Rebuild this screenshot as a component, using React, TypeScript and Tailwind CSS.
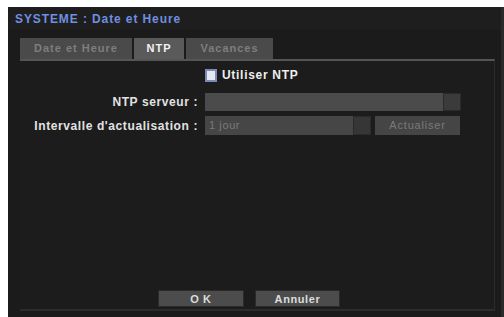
export default function App() {
  return (
    <div className="h-[317px] w-[504px] overflow-hidden bg-white pl-[8px] pt-[7px] font-['Liberation_Sans',Arial,sans-serif] font-bold">
      <div className="flex h-[310px] w-[496px] flex-col border-r-[3px] border-[#2a2a2a] bg-[#1b1b1b]">
        <div className="flex h-[23px] items-center bg-[#1e1e1e] pl-[7px] text-[12px] tracking-[0.9px] text-[#6f8fe0]">
          SYSTEME : Date et Heure
        </div>
        <div className="flex flex-1 flex-col pl-[12px] pr-[6px] pt-[8px]">
          <div className="flex h-[21px] gap-[2px] text-[11px] tracking-[1px]">
            <Tab label="Date et Heure" w="w-[112px]" />
            <Tab label="NTP" w="w-[50px]" active />
            <Tab label="Vacances" w="w-[87px]" />
          </div>
          <div className="flex h-[252px] flex-col border-t-[2px] border-b-[2px] border-r border-t-[#555] border-b-[#2c2c2c] border-r-[#2c2c2c] bg-[#1c1c1c]">
            <div className="mt-[5px] flex items-center pl-[185px]">
              <span className="h-[13px] w-[12px] border-[2px] border-[#7d8bb4] bg-[#e4e8f4]" />
              <span className="ml-[5px] text-[12px] tracking-[0.7px] text-[#eeeeee]">Utiliser NTP</span>
            </div>
            <div className="mt-[9px] grid grid-cols-[178px_1fr] items-center gap-x-[7px] gap-y-[5px] text-[12px] tracking-[0.6px] text-[#e2e2e2]">
              <span className="text-right">NTP serveur :</span>
              <div className="flex h-[18px]">
                <div className="w-[238px] bg-[#4b4b4b]" />
                <div className="w-[18px] border border-[#2a2a2a] bg-[#3b3b3b]" />
              </div>
              <span className="text-right">Intervalle d'actualisation :</span>
              <div className="flex h-[19px]">
                <div className="flex w-[148px] items-center bg-[#464646] pl-[4px] text-[11px] font-normal text-[#7a7a7a]">1 jour</div>
                <div className="w-[18px] border border-[#2a2a2a] bg-[#363636]" />
                <div className="ml-[4px] flex w-[85px] items-center justify-center bg-[#454545] text-[11px] font-normal tracking-[0.8px] text-[#7a7a7a]">Actualiser</div>
              </div>
            </div>
            <div className="mt-auto mb-[2px] flex justify-center gap-[11px] pr-[16px] text-[11px] tracking-[0.6px] text-[#dcdcdc]">
              <button className="h-[17px] w-[86px] border border-[#2a2a2a] bg-[#4c4c4c]">O K</button>
              <button className="h-[17px] w-[85px] border border-[#2a2a2a] bg-[#4c4c4c]">Annuler</button>
            </div>
          </div>
        </div>
      </div>
    </div>
  )
}

function Tab({ label, w, active }: { label: string; w: string; active?: boolean }) {
  return (
    <div className={`flex items-center justify-center ${w} ${active ? 'bg-[#5a5a5a] text-[#f2f2f2]' : 'bg-[#4a4a4a] text-[#7e7e7e]'}`}>
      {label}
    </div>
  )
}
